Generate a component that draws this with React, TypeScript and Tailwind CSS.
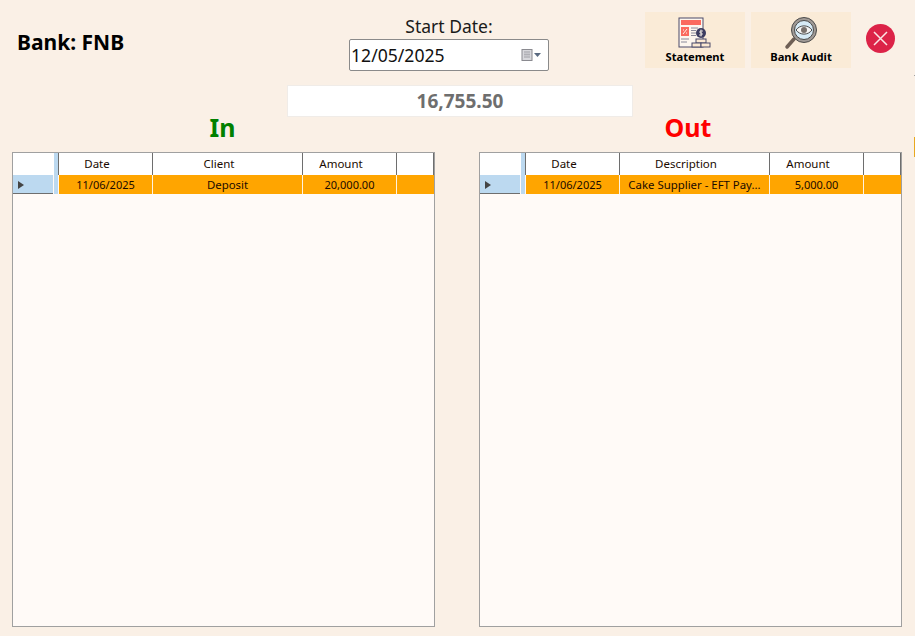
import React from "react";

const font = "font-['Noto_Sans','Open_Sans',sans-serif]";

function StatementIcon() {
    return (
        <svg width="34" height="32" viewBox="0 0 34 32" fill="none">
            <rect x="1" y="1" width="24" height="29" fill="#fdf6ee" stroke="#4a4a6a" strokeWidth="1" />
            <rect x="3" y="3" width="20" height="5" fill="#fb6a5e" />
            <rect x="3" y="10" width="8" height="9" fill="#fb6a5e" />
            <path d="M5 17l4-5M5 13h1M8 16h1" stroke="#fdf6ee" strokeWidth="1" />
            <path d="M13 11h7M13 13.5h5M13 16h5M13 18.500h5M3 22h8M3 25h6" stroke="#8a8a9a" strokeWidth="1" />
            <circle cx="23" cy="16" r="5" fill="#3c3c60" />
            <path d="M25 14h-3v2h2v2h-3M23 12.500v7" stroke="#fdf6ee" strokeWidth="0.8" />
            <rect x="18" y="22" width="10" height="4" fill="#fbe9d2" stroke="#4a4a6a" />
            <rect x="14" y="26" width="9" height="4" fill="#fbe9d2" stroke="#4a4a6a" />
            <rect x="23" y="26" width="9" height="4" fill="#fbe9d2" stroke="#4a4a6a" />
        </svg>
    );
}

function AuditIcon() {
    return (
        <svg width="34" height="33" viewBox="0 0 34 33" fill="none">
            <path d="M10 22L3 30" stroke="#6e5f55" strokeWidth="3.500" strokeLinecap="round" />
            <circle cx="20" cy="13" r="12.500" fill="#a09a96" stroke="#4a4a4a" strokeWidth="1" />
            <circle cx="20" cy="13" r="9.500" fill="#d6eaf6" stroke="#4a4a4a" strokeWidth="1" />
            <path d="M12 13c4-5.500 12-5.500 16 0c-4 5.500-12 5.500-16 0z" fill="#f4f4f4" stroke="#4a4a4a" strokeWidth="1" />
            <circle cx="20" cy="13" r="3" fill="#77706c" />
        </svg>
    );
}

function CalendarIcon() {
    return (
        <svg width="22" height="14" viewBox="0 0 22 14" fill="none">
            <rect x="1" y="1.500" width="10" height="11" fill="#d8d8dc" stroke="#8a8a90" />
            <path d="M3 4h6M3 6.500h6M3 9h6M4 3v7M6 3v7M8 3v7" stroke="#a6a6ac" strokeWidth="0.7" />
            <path d="M13 5h7l-3.500 4z" fill="#5a6a80" />
        </svg>
    );
}

function Grid({ col2, text2 }: { col2: string; text2: string }) {
    return (
        <div className="w-[423px] h-[475px] border border-[#a0a0a0] bg-[#fffaf7] text-[11px] leading-none text-[#1a0a00]">
            <div className="flex h-[22px] bg-white text-[11.500px]">
                <div className="w-[41px]" />
                <div className="w-[4px] bg-[#bcd9f0]" />
                <div className="w-[1px] bg-[#6e6e6e]" />
                <div className="w-[94px] flex items-center justify-center pr-[17px] border-r border-[#6e6e6e]">Date</div>
                <div className="w-[150px] flex items-center justify-center pr-[17px] border-r border-[#6e6e6e]">{col2}</div>
                <div className="w-[94px] flex items-center justify-center pr-[17px] border-r border-[#6e6e6e]">Amount</div>
                <div className="flex-1 border-r border-[#6e6e6e]" />
            </div>
            <div className="flex h-[19px]">
                <div className="w-[40px] bg-[#bcd9f0] border-b border-[#6e6e6e] flex items-center pl-[5px] pt-[1px]">
                    <div className="w-0 h-0 border-y-[4.500px] border-y-transparent border-l-[6px] border-l-[#444444]" />
                </div>
                <div className="w-[1px]" />
                <div className="w-[4px] bg-[#bcd9f0]" />
                <div className="w-[1px] bg-[#fffaf7]" />
                <div className="w-[94px] bg-[#ffa500] flex items-center justify-center border-r border-[#fff3e0]">11/06/2025</div>
                <div className="w-[150px] bg-[#ffa500] flex items-center justify-center border-r border-[#fff3e0] whitespace-nowrap overflow-hidden text-[11.400px]">{text2}</div>
                <div className="w-[94px] bg-[#ffa500] flex items-center justify-center border-r border-[#fff3e0]">{col2 === "Client" ? "20,000.00" : "5,000.00"}</div>
                <div className="flex-1 bg-[#ffa500]" />
            </div>
        </div>
    );
}

export default function App() {
    return (
        <div className={`relative w-[915px] h-[636px] overflow-hidden bg-[#faf0e6] ${font}`}>
            <div className="flex items-start h-[85px]">
                <div className="w-[349px] pl-[17px] pt-[27px] text-[21px] leading-[30px] font-bold text-black">Bank: FNB</div>
                <div className="w-[200px] pt-[13px] flex flex-col items-center">
                    <div className="text-[17.500px] leading-[26px] text-[#1a1a1a]">Start Date:</div>
                    <div className="w-[200px] h-[32px] bg-white border border-[#8a8a8a] rounded-[2px] flex items-center justify-between pl-[1px] pr-[5px] text-[17.600px] text-[#111111]">
                        <span>12/05/2025</span>
                        <CalendarIcon />
                    </div>
                </div>
                <div className="ml-[96px] mt-[12px] flex gap-[6px]">
                    <div className="w-[100px] h-[56px] bg-[#faebd7] flex flex-col items-center pt-[5px]">
                        <div className="h-[32px]"><StatementIcon /></div>
                        <div className="text-[11.200px] leading-[15px] font-bold text-black">Statement</div>
                    </div>
                    <div className="w-[100px] h-[56px] bg-[#faebd7] flex flex-col items-center pt-[5px]">
                        <div className="h-[32px]"><AuditIcon /></div>
                        <div className="text-[11.200px] leading-[15px] font-bold text-black">Bank Audit</div>
                    </div>
                </div>
                <div className="ml-[15px] mt-[24px] w-[29px] h-[29px] rounded-full bg-[#dc2348] flex items-center justify-center">
                    <svg width="15" height="15" viewBox="0 0 15 15" fill="none">
                        <path d="M1 1l13 13M14 1L1 14" stroke="#fbe5e5" strokeWidth="1.500" />
                    </svg>
                </div>
            </div>

            <div className="ml-[287px] w-[346px] h-[32px] bg-white border border-[#f0ece8] flex items-center justify-center text-[19px] font-bold text-[#6e6e6e]">16,755.50</div>

            <div className="flex h-[35px] text-[25px] font-bold leading-[20px]">
                <div className="w-[445px] text-center text-[#008000]">In</div>
                <div className="w-[470px] pl-[16px] text-center text-[#ff0000]">Out</div>
            </div>

            <div className="flex pl-[12px] gap-[44px]">
                <Grid col2="Client" text2="Deposit" />
                <Grid col2="Description" text2="Cake Supplier - EFT Pay..." />
            </div>

            <div className="absolute right-0 top-[137px] w-[1px] h-[20px] bg-[#e8a820]" />
            <div className="absolute right-0 top-[75px] w-[1px] h-[1px] bg-[#a0a0a0]" />
        </div>
    );
}
